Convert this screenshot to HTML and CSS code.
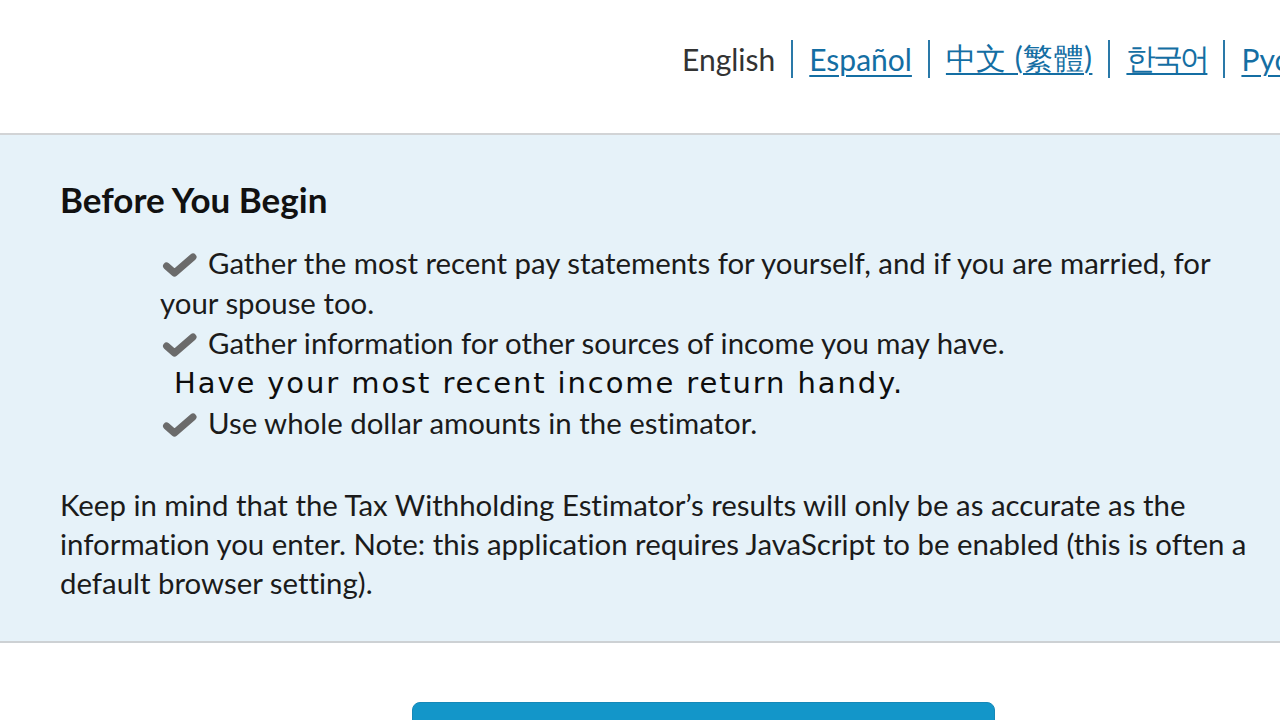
FILE: index.html
```html
<!DOCTYPE html>
<html lang="en">
<head>
<meta charset="utf-8">
<title>Tax Withholding Estimator</title>
<link rel="stylesheet" href="styles.css">
</head>
<body>
<header class="top">
  <nav class="langs">
    <span class="lang current">English</span>
    <span class="sep"></span>
    <a class="lang" href="#">Español</a>
    <span class="sep"></span>
    <a class="lang zh" href="#">中文 (繁體)</a>
    <span class="sep"></span>
    <a class="lang ko" href="#">한국어</a>
    <span class="sep"></span>
    <a class="lang" href="#">Русский</a>
  </nav>
</header>
<main class="panel">
  <h2 class="title">Before You Begin</h2>
  <ul class="checks">
    <li><svg class="chk" viewBox="0 0 36 26"><path d="M4.5 14 L12.5 21 L31 5" fill="none" stroke="#6b6b6b" stroke-width="7" stroke-linecap="round" stroke-linejoin="round"/></svg>Gather the most recent pay statements for yourself, and if you are married, for your spouse too.</li>
    <li><svg class="chk" viewBox="0 0 36 26"><path d="M4.5 14 L12.5 21 L31 5" fill="none" stroke="#6b6b6b" stroke-width="7" stroke-linecap="round" stroke-linejoin="round"/></svg>Gather information for other sources of income you may have.</li>
    <li class="overlay">Have your most recent income return handy.</li>
    <li><svg class="chk" viewBox="0 0 36 26"><path d="M4.5 14 L12.5 21 L31 5" fill="none" stroke="#6b6b6b" stroke-width="7" stroke-linecap="round" stroke-linejoin="round"/></svg>Use whole dollar amounts in the estimator.</li>
  </ul>
  <p class="note">Keep in mind that the Tax Withholding Estimator’s results will only be as accurate as the information you enter. Note: this application requires JavaScript to be enabled (this is often a default browser setting).</p>
</main>
<section class="actions">
  <button class="start" type="button"></button>
</section>
</body>
</html>
```
FILE: styles.css
```css
html, body {
  margin: 0;
  padding: 0;
  background: #ffffff;
  overflow: hidden;
  width: 1280px;
  height: 720px;
}
body {
  font-family: "Lato", "Noto Sans", "Liberation Sans", sans-serif;
  font-variant-ligatures: none;
  color: #1b1b1b;
}
.top {
  height: 135px;
  border-bottom: 2px solid #d2d4d6;
  box-sizing: border-box;
  padding: 40px 0 0 682px;
  white-space: nowrap;
  overflow: hidden;
}
.langs {
  display: flex;
  align-items: center;
  gap: 16px;
  font-size: 30px;
  height: 38px;
}
.lang {
  color: #146ea3;
  text-decoration: underline;
  text-underline-offset: 4px;
  text-decoration-thickness: 2px;
  flex: none;
}
.lang.current {
  color: #333333;
  text-decoration: none;
}
.lang.zh {
  letter-spacing: 0.4px;
}
.lang.ko {
  letter-spacing: -3px;
}
.sep {
  flex: none;
  width: 2px;
  height: 38px;
  background: #2a79a8;
}
.panel {
  background: #e6f2f9;
  border-bottom: 2px solid #cdd1d4;
  padding: 42px 16px 0 60px;
  height: 508px;
  box-sizing: border-box;
}
.title {
  margin: 0 0 22px;
  font-size: 35px;
  font-weight: 700;
  color: #111111;
  line-height: 44px;
}
.checks {
  list-style: none;
  margin: 0 0 42px;
  padding: 0 0 0 100px;
  font-size: 29.4px;
  line-height: 40px;
}
.checks li {
  margin: 0;
}
.chk {
  width: 36px;
  height: 26px;
  vertical-align: -4px;
  margin: 0 10px 0 2px;
}
.overlay {
  font-family: "DejaVu Sans", sans-serif;
  font-size: 29px;
  letter-spacing: 1.9px;
  color: #0d0d0d;
  padding-left: 14px;
  line-height: 40px;
}
.note {
  margin: 0;
  font-size: 29.4px;
  line-height: 39px;
}
.actions {
  display: flex;
  justify-content: flex-start;
  padding: 59px 0 0 412px;
}
.start {
  width: 583px;
  height: 60px;
  background: #1396c9;
  border: 1px solid #1688b8;
  border-radius: 8px;
}
```
